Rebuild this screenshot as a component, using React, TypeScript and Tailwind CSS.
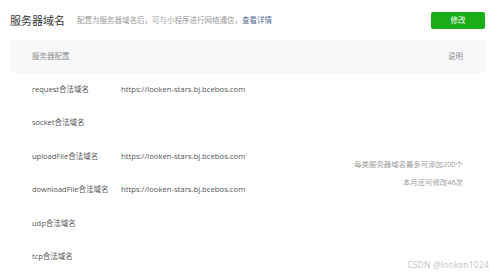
import React from "react";

const rows: { label: string; url?: string }[] = [
  { label: "request合法域名", url: "https://looken-stars.bj.bcebos.com" },
  { label: "socket合法域名" },
  { label: "uploadFile合法域名", url: "https://looken-stars.bj.bcebos.com" },
  { label: "downloadFile合法域名", url: "https://looken-stars.bj.bcebos.com" },
  { label: "udp合法域名" },
  { label: "tcp合法域名" },
];

export default function App() {
  return (
    <div
      className="relative w-[498px] h-[273px] overflow-hidden bg-white"
      style={{ fontFamily: '"Open Sans", "Noto Sans CJK SC", sans-serif' }}
    >
      <div className="flex items-center h-[17px] mt-[12px] pl-[10px] pr-[13px]">
        <div className="text-[11px] leading-none text-[#353535]">服务器域名</div>
        <div className="ml-[12px] text-[7.5px] leading-none text-[#9a9a9a]">
          配置为服务器域名后，可与小程序进行网络通信，
          <span className="text-[#576b95]">查看详情</span>
        </div>
        <div className="ml-auto flex items-center justify-center w-[54px] h-[17px] rounded-[2px] bg-[#1aad19] text-white text-[7.5px] leading-none">
          修改
        </div>
      </div>

      <div className="ml-[10px] mt-[11px] w-[476px]">
        <div className="flex items-center justify-between h-[33px] bg-[#f6f8fa] pl-[22px] pr-[23px] text-[7.5px] text-[#8c8c8c] leading-none">
          <span>服务器配置</span>
          <span>说明</span>
        </div>
        <div className="flex">
          <div className="flex flex-col pl-[22px]">
            {rows.map((r) => (
              <div key={r.label} className="flex items-center h-[33.4px] text-[7.5px] leading-none text-[#555555]">
                <span className="w-[89px] whitespace-nowrap">{r.label}</span>
                {r.url && <span className="whitespace-nowrap text-[7.7px]">{r.url}</span>}
              </div>
            ))}
          </div>
          <div className="flex-1 flex flex-col justify-center items-end pr-[23px] gap-[10px] text-[7.4px] leading-[8px] text-[#9a9a9a]">
            <span>每类服务器域名最多可添加200个</span>
            <span>本月还可修改46次</span>
          </div>
        </div>
      </div>

      <div className="absolute right-[9px] top-[260px] text-[8.5px] leading-[10px] text-[#c2c2c2] tracking-[0.2px]">
        CSDN @looken1024
      </div>
    </div>
  );
}
